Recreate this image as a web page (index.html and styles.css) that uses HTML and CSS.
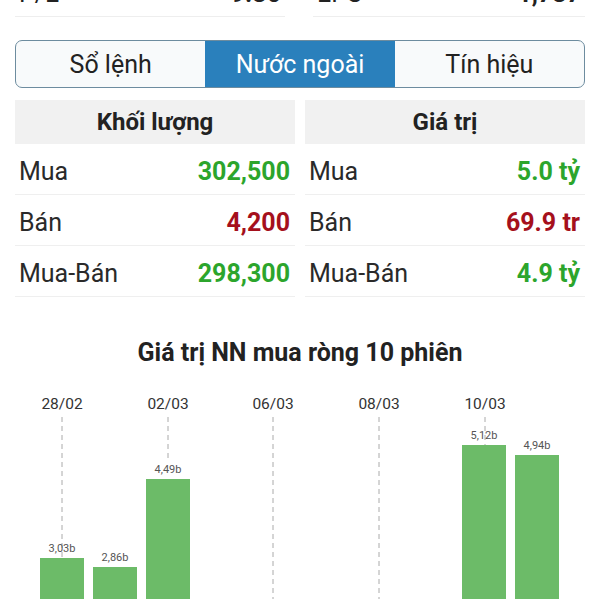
FILE: index.html
```html
<!DOCTYPE html>
<html lang="vi">
<head>
  <meta charset="UTF-8" />
  <meta name="viewport" content="width=device-width, initial-scale=1.0"/>
  <title>Nước ngoài</title>
  <link rel="stylesheet" href="styles.css">
</head>
<body>
  <div class="nn-page">
    <!-- Ratio row (scrolled, top cut off) -->
    <div class="nn-ratios">
      <div class="nn-ratio"><span>P/E</span><span>9.35</span></div>
      <div class="nn-ratio"><span>EPS</span><span>1,737</span></div>
    </div>

    <!-- Tabs -->
    <div class="nn-tabs">
      <div class="nn-tab">Sổ lệnh</div>
      <div class="nn-tab nn-tab-active">Nước ngoài</div>
      <div class="nn-tab">Tín hiệu</div>
    </div>

    <!-- Summary tables -->
    <div class="nn-tables">
      <div class="nn-table">
        <div class="nn-head">Khối lượng</div>
        <div class="nn-row"><span>Mua</span><span class="nn-up">302,500</span></div>
        <div class="nn-row"><span>Bán</span><span class="nn-down">4,200</span></div>
        <div class="nn-row"><span>Mua-Bán</span><span class="nn-up">298,300</span></div>
      </div>
      <div class="nn-table">
        <div class="nn-head">Giá trị</div>
        <div class="nn-row"><span>Mua</span><span class="nn-up">5.0 tỷ</span></div>
        <div class="nn-row"><span>Bán</span><span class="nn-down">69.9 tr</span></div>
        <div class="nn-row"><span>Mua-Bán</span><span class="nn-up">4.9 tỷ</span></div>
      </div>
    </div>

    <h2 class="nn-title">Giá trị NN mua ròng 10 phiên</h2>

    <!-- Chart -->
    <svg class="nn-chart" width="600" height="220" viewBox="0 0 600 220">
      <g class="nn-grid">
        <line x1="62" y1="38" x2="62" y2="179"/>
        <line x1="168" y1="38" x2="168" y2="80"/>
        <line x1="273" y1="38" x2="273" y2="220"/>
        <line x1="379" y1="38" x2="379" y2="220"/>
        <line x1="485" y1="38" x2="485" y2="66"/>
      </g>
      <g class="nn-dates">
        <text x="62" y="30">28/02</text>
        <text x="168" y="30">02/03</text>
        <text x="273" y="30">06/03</text>
        <text x="379" y="30">08/03</text>
        <text x="485" y="30">10/03</text>
      </g>
      <g class="nn-bars">
        <rect x="40" y="179" width="44" height="41"/>
        <rect x="93" y="188" width="44" height="32"/>
        <rect x="146" y="100" width="44" height="120"/>
        <rect x="462" y="66" width="44" height="154"/>
        <rect x="515" y="76" width="44" height="144"/>
      </g>
      <g class="nn-values">
        <text x="62" y="173">3,03b</text>
        <text x="115" y="182">2,86b</text>
        <text x="168" y="94">4,49b</text>
        <text x="484" y="60">5,12b</text>
        <text x="537" y="70">4,94b</text>
      </g>
    </svg>
  </div>
</body>
</html>
```

FILE: styles.css
```css
:root {
  --nn-blue: #2a80bc;
  --nn-border: #6d8c9f;
  --nn-green: #2ca52c;
  --nn-red: #a5101c;
  --nn-bar: #6cbb68;
  --nn-text: #222;
}

body {
  margin: 0;
  background: #fff;
  font-family: Roboto, "Noto Sans", Arial, sans-serif;
  color: var(--nn-text);
}

.nn-page {
  width: 600px;
  height: 600px;
  overflow: hidden;
}

.nn-ratios {
  display: grid;
  grid-template-columns: 270px 272px;
  gap: 28px;
  padding: 0 15px;
  margin-top: -20px;
}

.nn-ratio {
  display: flex;
  justify-content: space-between;
  font-size: 25px;
  line-height: 28px;
  padding: 0 4px 8px;
  border-bottom: 1px solid #eee;
}

.nn-ratio span:last-child {
  font-weight: bold;
}

.nn-tabs {
  display: grid;
  grid-template-columns: 1fr 1fr 1fr;
  margin: 23px 15px 0;
  height: 48px;
  box-sizing: border-box;
  border: 1.5px solid var(--nn-border);
  border-radius: 7px;
  overflow: hidden;
  background: #f8fafb;
}

.nn-tab {
  display: flex;
  align-items: center;
  justify-content: center;
  font-size: 25px;
  color: #222;
}

.nn-tab-active {
  background: var(--nn-blue);
  color: #fff;
}

.nn-tables {
  display: grid;
  grid-template-columns: 1fr 1fr;
  gap: 10px;
  padding: 0 15px;
  margin-top: 12px;
}

.nn-head {
  background: #f1f1f1;
  height: 44px;
  display: flex;
  align-items: center;
  justify-content: center;
  font-size: 24px;
  font-weight: bold;
}

.nn-row {
  display: flex;
  justify-content: space-between;
  align-items: center;
  height: 51px;
  box-sizing: border-box;
  padding: 5px 5px 0 4px;
  border-bottom: 1px solid #efefef;
  font-size: 25px;
  color: #2a2a2a;
}

.nn-row span:last-child {
  font-weight: bold;
}

.nn-up {
  color: var(--nn-green);
}

.nn-down {
  color: var(--nn-red);
}

.nn-title {
  margin: 40px 0 0;
  text-align: center;
  font-size: 25px;
  font-weight: bold;
  line-height: 32px;
}

.nn-chart {
  display: block;
  margin-top: 10px;
}

.nn-grid line {
  stroke: #aaa;
  stroke-width: 1;
  stroke-dasharray: 5 4;
}

.nn-dates text {
  font-size: 15.5px;
  fill: #333;
  text-anchor: middle;
}

.nn-bars rect {
  fill: var(--nn-bar);
}

.nn-values text {
  font-size: 11px;
  fill: #555;
  text-anchor: middle;
}
```
